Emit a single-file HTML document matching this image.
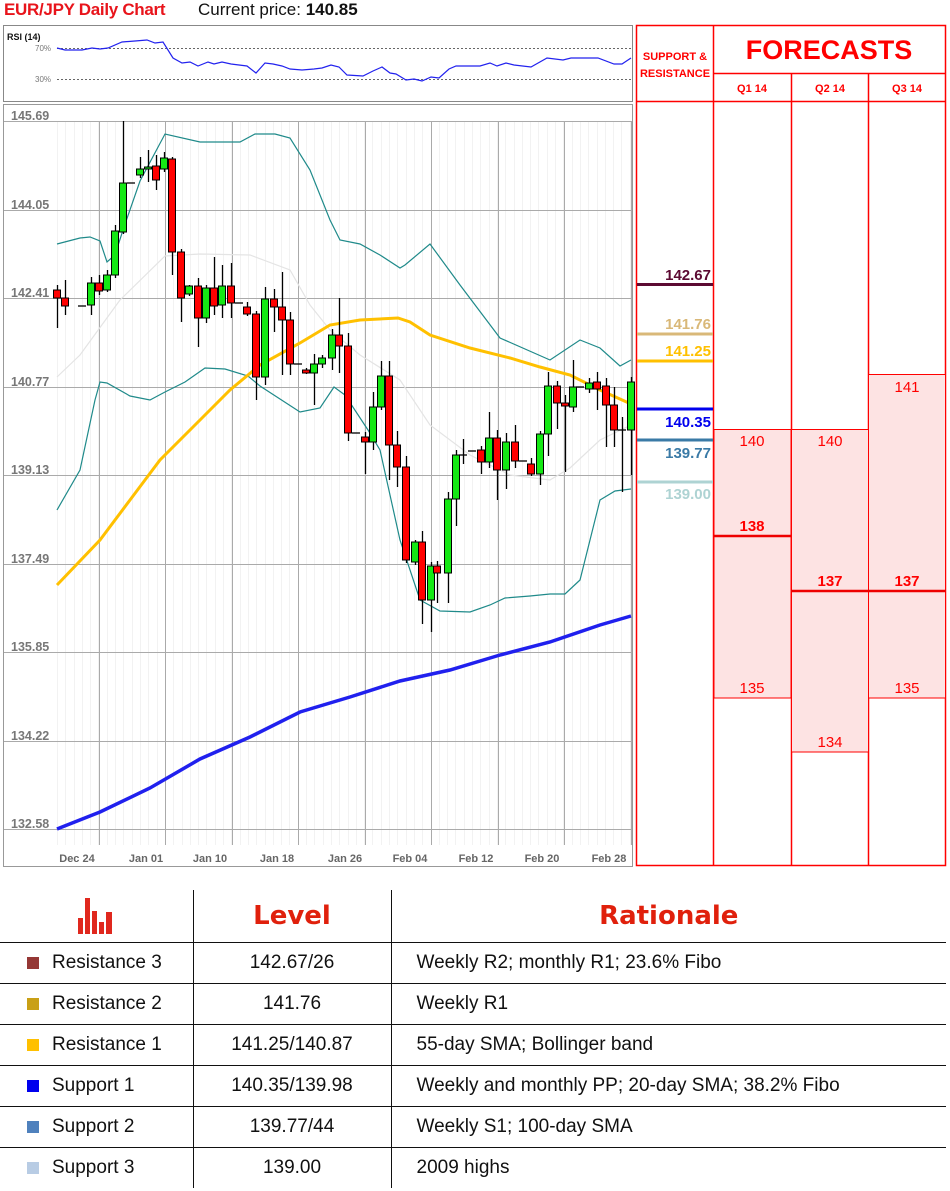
<!DOCTYPE html>
<html><head><meta charset="utf-8">
<style>
*{margin:0;padding:0;box-sizing:border-box}
body{width:950px;height:1191px;background:#fff;font-family:"Liberation Sans",sans-serif;position:relative;overflow:hidden}
.abs{position:absolute}
.title{left:4px;top:0;font-size:17px;color:#e8141b;font-weight:bold;letter-spacing:-0.3px}
.cp{left:198px;top:0;font-size:17px;color:#111}
table.bt{position:absolute;left:0;top:890px;width:946px;border-collapse:collapse;font-size:19px;color:#111}
.bt td{border-top:1.5px solid #111;height:41px;vertical-align:middle}
.bt td+td{border-left:1.5px solid #111}
.bt tr:first-child td{border-top:none;height:52px}
.bt .h{font-size:26px;font-weight:900;color:#e0200c;text-align:center;font-family:"DejaVu Sans",sans-serif}
.sq{display:inline-block;width:12px;height:12px;margin:0 13px 0 27px;vertical-align:-1px}
</style></head><body>
<div class="abs title">EUR/JPY Daily Chart</div>
<div class="abs cp">Current price: <b>140.85</b></div>

<svg class="abs" style="left:0;top:0" width="950" height="890">
<rect x="3.5" y="25.5" width="629" height="76" fill="#fff" stroke="#888"/>
<text x="7" y="40" font-size="9" font-weight="bold" fill="#111" font-family="Liberation Sans">RSI (14)</text>
<text x="35" y="51" font-size="8" fill="#777" font-family="Liberation Sans">70%</text>
<text x="35" y="82" font-size="8" fill="#777" font-family="Liberation Sans">30%</text>
<line x1="57" y1="48.5" x2="632" y2="48.5" stroke="#666" stroke-dasharray="2,2"/>
<line x1="57" y1="79.5" x2="632" y2="79.5" stroke="#666" stroke-dasharray="2,2"/>
<polyline fill="none" stroke="#2222ee" stroke-width="1.2" points="57,48 65,50 82,50 92,48 100,49 108,48 122,42 135,41 147,40 155,43 163,42 173,58 182,63 190,62 198,66 208,62 214,64 222,62 231,64 247,66 256,73 265,63 273,64 282,66 290,69 302,70 314,69 322,68 331,65 339,67 347,75 363,76 373,71 382,67 390,73 396,74 406,80 414,79 422,81 431,77 439,78 449,69 456,66 480,66 490,63 497,66 506,63 514,65 531,67 547,58 563,60 571,58 598,58 614,64 622,64 631,58"/>
<rect x="3.5" y="104.5" width="629" height="762" fill="#fff" stroke="#999"/>
<g id="minor" stroke="#f2f2f2" stroke-width="1"></g>
<g stroke="#aaa" stroke-width="1">
<line x1="4" y1="121.5" x2="632" y2="121.5"/><line x1="4" y1="210.5" x2="632" y2="210.5"/><line x1="4" y1="298.5" x2="632" y2="298.5"/><line x1="4" y1="387.5" x2="632" y2="387.5"/><line x1="4" y1="475.5" x2="632" y2="475.5"/><line x1="4" y1="564.5" x2="632" y2="564.5"/><line x1="4" y1="652.5" x2="632" y2="652.5"/><line x1="4" y1="741.5" x2="632" y2="741.5"/><line x1="4" y1="829.5" x2="632" y2="829.5"/>
<line x1="99.5" y1="121" x2="99.5" y2="845"/><line x1="165.5" y1="121" x2="165.5" y2="845"/><line x1="232.5" y1="121" x2="232.5" y2="845"/><line x1="298.5" y1="121" x2="298.5" y2="845"/><line x1="365.5" y1="121" x2="365.5" y2="845"/><line x1="431.5" y1="121" x2="431.5" y2="845"/><line x1="498.5" y1="121" x2="498.5" y2="845"/><line x1="564.5" y1="121" x2="564.5" y2="845"/><line x1="631.5" y1="121" x2="631.5" y2="845"/>
</g>
<g font-size="12.5" fill="#777" font-weight="bold" font-family="Liberation Sans">
<text x="11" y="120">145.69</text><text x="11" y="209">144.05</text><text x="11" y="297">142.41</text><text x="11" y="386">140.77</text><text x="11" y="474">139.13</text><text x="11" y="563">137.49</text><text x="11" y="651">135.85</text><text x="11" y="740">134.22</text><text x="11" y="828">132.58</text>
</g>
<g font-size="11" fill="#666" font-weight="bold" font-family="Liberation Sans" text-anchor="middle">
<text x="77" y="862">Dec 24</text><text x="146" y="862">Jan 01</text><text x="210" y="862">Jan 10</text><text x="277" y="862">Jan 18</text><text x="345" y="862">Jan 26</text><text x="410" y="862">Feb 04</text><text x="476" y="862">Feb 12</text><text x="542" y="862">Feb 20</text><text x="609" y="862">Feb 28</text>
</g>
<polyline fill="none" stroke="#e4e4e4" stroke-width="1.2" points="57,377 80,355 120,300 165,256 200,254 250,255 290,270 310,305 330,330 360,355 400,380 430,425 470,455 510,475 550,480 570,468 600,440 631,425"/>
<polyline fill="none" stroke="#1f8a8a" stroke-width="1.2" points="57,244 80,238 90,237 100,241 107,262 115,255 123,230 140,181 165,134 200,142 240,142 255,134 275,134 290,138 310,170 330,220 340,240 360,244 380,255 400,268 405,265 430,244 460,285 500,338 550,360 580,340 600,348 620,366 631,360"/>
<polyline fill="none" stroke="#1f8a8a" stroke-width="1.2" points="57,510 80,470 95,400 100,382 107,383 130,396 150,400 165,392 185,382 205,368 225,369 248,376 260,386 300,412 320,408 334,387 345,395 368,430 380,450 400,540 420,600 440,611 470,612 490,605 505,598 530,596 550,594 565,594 580,580 600,500 615,491 631,489"/>
<polyline fill="none" stroke="#ffc000" stroke-width="3" points="57,585 100,540 130,500 160,460 200,420 230,390 260,365 300,343 330,325 360,320 398,318 410,322 430,335 470,348 510,358 540,367 570,375 600,390 631,404"/>
<polyline fill="none" stroke="#2020ee" stroke-width="3.5" points="57,829 100,812 150,788 200,759 250,737 300,712 350,697 400,681 450,670 500,655 550,642 600,625 631,616"/>
<g id="cnd"></g>
<g stroke="#f00" stroke-width="1.5" fill="none">
<rect x="636.5" y="25.5" width="309" height="840"/>
<line x1="713.5" y1="25" x2="713.5" y2="866"/>
<line x1="791.5" y1="73" x2="791.5" y2="866"/>
<line x1="868.5" y1="73" x2="868.5" y2="866"/>
<line x1="713" y1="73.5" x2="946" y2="73.5"/>
<line x1="636" y1="101.5" x2="946" y2="101.5"/>
</g>
<rect x="714" y="429.5" width="77" height="268.5" fill="#fde3e3" stroke="#f00"/>
<rect x="791.5" y="429.5" width="77" height="322.5" fill="#fde3e3" stroke="#f00"/>
<rect x="868.5" y="374.5" width="77" height="323.5" fill="#fde3e3" stroke="#f00"/>
<line x1="714" y1="536" x2="791" y2="536" stroke="#e00" stroke-width="2.5"/>
<line x1="791" y1="591" x2="946" y2="591" stroke="#e00" stroke-width="2.5"/>
<g font-family="Liberation Sans" font-weight="bold" fill="#f00" text-anchor="middle">
<text x="675" y="60" font-size="11">SUPPORT &amp;</text><text x="675" y="77" font-size="11">RESISTANCE</text>
<text x="829" y="59" font-size="27">FORECASTS</text>
<text x="752" y="92" font-size="11">Q1 14</text><text x="830" y="92" font-size="11">Q2 14</text><text x="907" y="92" font-size="11">Q3 14</text>
</g>
<g font-family="Liberation Sans" fill="#f00" text-anchor="middle" font-size="15">
<text x="752" y="446">140</text><text x="830" y="446">140</text><text x="907" y="392">141</text>
<text x="752" y="531" font-weight="bold">138</text><text x="830" y="586" font-weight="bold">137</text><text x="907" y="586" font-weight="bold">137</text>
<text x="752" y="693">135</text><text x="830" y="747">134</text><text x="907" y="693">135</text>
</g>
<g stroke-width="3">
<line x1="637" y1="284.5" x2="713" y2="284.5" stroke="#5c0a32"/>
<line x1="637" y1="334" x2="713" y2="334" stroke="#d9b878"/>
<line x1="637" y1="361" x2="713" y2="361" stroke="#ffc000"/>
<line x1="637" y1="409" x2="713" y2="409" stroke="#0000ee"/>
<line x1="637" y1="440" x2="713" y2="440" stroke="#3a7aa6"/>
<line x1="637" y1="482" x2="713" y2="482" stroke="#aed3d3"/>
</g>
<g font-family="Liberation Sans" font-weight="bold" font-size="15" text-anchor="end">
<text x="711" y="280" fill="#5c0a32">142.67</text>
<text x="711" y="329" fill="#d9b878">141.76</text>
<text x="711" y="356" fill="#ffc000">141.25</text>
<text x="711" y="427" fill="#0000ee">140.35</text>
<text x="711" y="458" fill="#3a7aa6">139.77</text>
<text x="711" y="499" fill="#aed3d3">139.00</text>
</g>
</svg>

<table class="bt">
<tr><td style="width:193px;text-align:center"><svg width="36" height="36" viewBox="0 0 36 36" style="display:block;margin:0 auto"><g fill="#e0281e"><rect x="0" y="20" width="5" height="16"/><rect x="7" y="0" width="5" height="36"/><rect x="14" y="13" width="5" height="23"/><rect x="21" y="24" width="5" height="12"/><rect x="28" y="14" width="6" height="22"/></g></svg></td><td class="h" style="width:198px">Level</td><td class="h">Rationale</td></tr>
<tr><td><span class="sq" style="background:#953735"></span>Resistance 3</td><td style="text-align:center">142.67/26</td><td style="padding-left:25px">Weekly R2; monthly R1; 23.6% Fibo</td></tr>
<tr><td><span class="sq" style="background:#c9a016"></span>Resistance 2</td><td style="text-align:center">141.76</td><td style="padding-left:25px">Weekly R1</td></tr>
<tr><td><span class="sq" style="background:#ffc000"></span>Resistance 1</td><td style="text-align:center">141.25/140.87</td><td style="padding-left:25px">55-day SMA; Bollinger band</td></tr>
<tr><td><span class="sq" style="background:#0000ee"></span>Support 1</td><td style="text-align:center">140.35/139.98</td><td style="padding-left:25px">Weekly and monthly PP; 20-day SMA; 38.2% Fibo</td></tr>
<tr><td><span class="sq" style="background:#4f81bd"></span>Support 2</td><td style="text-align:center">139.77/44</td><td style="padding-left:25px">Weekly S1; 100-day SMA</td></tr>
<tr><td><span class="sq" style="background:#b8cce4"></span>Support 3</td><td style="text-align:center">139.00</td><td style="padding-left:25px">2009 highs</td></tr>
</table>

<script>
var NS="http://www.w3.org/2000/svg";
var m=document.getElementById("minor");
for(var x=57;x<632;x+=8.3){var l=document.createElementNS(NS,"line");l.setAttribute("x1",Math.round(x)+.5);l.setAttribute("x2",Math.round(x)+.5);l.setAttribute("y1",121);l.setAttribute("y2",845);m.appendChild(l);}
var C=[[57,290,298,'r',285,328],[65,298,306,'r',280,315],[82,306,310,'d'],[91,283,305,'g',277,315],[99,283,291,'r',275,295],[107,275,290,'g',270,292],[115,231,275,'g',225,278],[123,183,232,'g',121,234],[131,183,183,'d'],[140,169,175,'g',157,178],[148,167,169,'g',150,182],[156,166,180,'r',155,190],[164,158,169,'g',152,172],[172,159,252,'r',157,275],[181,252,298,'r',249,322],[189,286,294,'g',285,296],[198,286,318,'r',278,347],[206,288,318,'g',285,323],[214,288,306,'r',257,315],[222,286,305,'g',265,318],[231,286,303,'r',263,318],[239,303,303,'d'],[247,307,314,'r',302,316],[256,314,377,'r',311,400],[265,299,377,'g',287,385],[274,299,307,'r',289,332],[282,307,320,'r',272,375],[290,320,364,'r',312,375],[298,364,364,'d'],[306,370,373,'r',368,374],[314,364,373,'g',354,405],[322,358,364,'g',355,368],[332,335,358,'g',329,370],[339,335,346,'r',298,373],[348,346,433,'r',333,441],[356,433,433,'d'],[365,437,442,'r',432,474],[373,407,442,'g',392,450],[381,376,407,'g',361,410],[389,376,445,'r',361,480],[397,445,467,'r',431,487],[406,467,560,'r',456,563],[415,542,562,'g',540,565],[422,542,600,'r',531,624],[431,566,600,'g',562,632],[437,566,573,'r',561,603],[448,499,573,'g',492,603],[456,455,499,'g',450,526],[463,455,455,'d',439,464],[472,451,451,'d'],[481,450,462,'r',446,474],[489,438,462,'g',412,468],[497,438,470,'r',430,500],[506,442,470,'g',433,489],[515,442,461,'r',425,468],[523,461,461,'d'],[531,464,474,'r',458,476],[540,434,474,'g',431,485],[548,386,434,'g',372,456],[557,386,403,'r',381,429],[565,403,406,'r',395,472],[573,387,407,'g',360,412],[580,387,387,'d'],[589,383,389,'g',378,393],[597,382,389,'r',372,410],[606,386,405,'r',378,447],[614,405,430,'r',387,447],[622,430,430,'d',417,492],[631,382,430,'g',377,475]];
var g=document.getElementById("cnd"),h="";
C.forEach(function(c){var x=c[0];
 if(c[4]!==undefined)h+='<line x1="'+(x+.5)+'" x2="'+(x+.5)+'" y1="'+c[4]+'" y2="'+c[5]+'" stroke="#000" stroke-width="1.3"/>';
 if(c[3]=='d'){h+='<line x1="'+(x-4)+'" x2="'+(x+4)+'" y1="'+c[1]+'" y2="'+c[1]+'" stroke="#000" stroke-width="1.3"/>';return;}
 h+='<rect x="'+(x-3.5)+'" y="'+c[1]+'" width="7" height="'+Math.max(2,c[2]-c[1])+'" fill="'+(c[3]=='g'?'#14e814':'#f00')+'" stroke="#000" stroke-width="1"/>';});
g.innerHTML=h;
</script>
</body></html>
